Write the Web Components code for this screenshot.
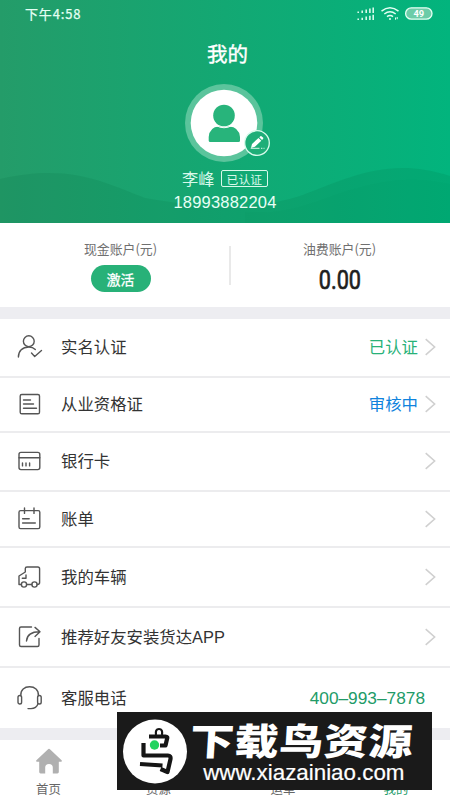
<!DOCTYPE html>
<html lang="zh-CN">
<head>
<meta charset="utf-8">
<title>我的</title>
<style>
html,body{margin:0;padding:0}
body{width:450px;height:800px;overflow:hidden;background:#fff;color:#333;font-family:"Noto Sans CJK SC",sans-serif}
</style>
</head>
<body>
<profile-page></profile-page>
<script>
function define(name, html){
  const t=document.createElement('template');
  t.innerHTML=html;
  customElements.define(name,class extends HTMLElement{
    constructor(){super();this.attachShadow({mode:'open'}).append(t.content.cloneNode(true));}
    connectedCallback(){
      this.shadowRoot.querySelectorAll('[data-icon]').forEach(e=>{e.innerHTML=icons[this.getAttribute('icon')]||'';});
    }
  });
}
const icons={
  user:'<circle cx="11.8" cy="7.2" r="5.4"/><path d="M1.4 23c0-6 4-10 10.4-10 3 0 5 1 6.5 2.5M14.5 19l3.2 3.4 6.8-6"/>',
  doc:'<rect x="3.2" y="3.5" width="19.3" height="19.3" rx="1.6"/><path d="M6.5 9h7M6.5 13h10M6.5 17.3h13"/>',
  card:'<rect x="2" y="4.4" width="20.8" height="17.2" rx="2"/><path d="M2 9.8h20.8M5.5 14.9v3M9 14.9v3M12.6 14.9v3"/>',
  bill:'<rect x="2" y="4.6" width="20.8" height="18" rx="1.6"/><path d="M7.5 2v5.4M17 2v5.4M5.6 12.7h6.6M5.6 17h12.7"/>',
  truck:'<path d="M4.3 20.5H2V12L8.3 8V4.5Q8.3 3 10 3H20.8Q22.6 3 22.6 4.8V18.5Q22.6 20.5 20.3 20.5M9.7 20.5h5M9 11v3.2H5.3"/><circle cx="7" cy="20.5" r="2.6"/><circle cx="17.5" cy="20.5" r="2.6"/>',
  share:'<path d="M14.5 3H4Q2.5 3 2.5 4.5V21Q2.5 22.5 4 22.5H20.5Q22 22.5 22 21V14.5M9.5 17C10 11 14 7.8 22.5 7.8M18 3.4l5 4.4L18 12.4"/>',
  phone:'<path d="M3.8 10.5C3.5 5 7.5 1.8 12.6 1.8S21.7 5 21.4 10.5M21 18.8C20 21.8 17 23.6 14 23.6h-3"/><rect x="1" y="10.5" width="3.6" height="8.5" rx="1.8"/><rect x="20.6" y="10.5" width="3.6" height="8.5" rx="1.8"/>'
};

define('status-bar',`<style>
:host{display:flex;height:28px;padding:0 17px 0 25px;align-items:center;justify-content:space-between;box-sizing:border-box;color:#e4fff3}
span{font:400 13px/28px "Noto Sans CJK SC",sans-serif;letter-spacing:.85px;-webkit-text-stroke:.25px}
svg{display:block}
</style><span>下午4:58</span>
<svg width="76" height="18" viewBox="0 0 76 18" fill="none" stroke="currentColor">
<path stroke-width="1.5" d="M1.2 7.2v1.5M5.2 6.4v2.3M9.2 5.4v3.3M12.9 4.4v4.3M16.2 3.3v5.4M1.2 14.4v1.5M5.2 13.6v2.3M9.2 12.4v3.5M12.9 11.6v4.3M16.2 10.5v5.4" transform="translate(0 -.8)"/>
<path stroke-width="1.5" d="M24.5 6.2Q33 -.8 41.5 6.2M27.3 9Q33 4.5 38.7 9M30 11.7Q33 9.3 36 11.7"/><circle cx="33" cy="14" r="1" fill="currentColor" stroke="none"/>
<path stroke-width="1" d="M38.5 12.5v2.2M40.2 12v2.2"/>
<rect x="48.6" y="2.8" width="26.4" height="11.4" rx="5.7" fill="#6ccca8" stroke-width="1.3"/>
<text x="61.8" y="11.8" text-anchor="middle" font-family="Roboto,sans-serif" font-weight="700" font-size="9.3" fill="#fff" stroke="none">49</text></svg>`);

define('user-avatar',`<style>
:host{display:block;position:relative;width:78px;height:78px}
svg{display:block}.edit{position:absolute;left:59px;top:44.5px}
</style>
<svg width="78" height="78"><circle cx="39" cy="39" r="39" fill="#5bc49c"/><circle cx="39" cy="39" r="33.3" fill="#fff"/><circle cx="39" cy="31.5" r="10.8" fill="#28b47b"/><path d="M23.7 56.7V53Q24.5 43 34 42.5 39 44 44 42.5 54 43 55 53v3.7q0 1.4-1.5 1.4H25.2q-1.5 0-1.5-1.4z" fill="#28b47b"/><path d="M31 41.5Q39 46 47 41.5" stroke="#fff" stroke-width="1" fill="none"/></svg>
<svg class="edit" width="26" height="28" viewBox="0 0 26 28"><circle cx="13" cy="14" r="12.3" fill="#1eae78" stroke="#d8fbec" stroke-width="1.3"/><path d="M7 19l1-4 6.5-6.1 2.8 2.8-6.4 6.1zM15.3 8.2l1.1-1q.7-.5 1.4.2l1.2 1.2q.7.7 0 1.4l-1 1z" fill="#fff"/><path d="M6.7 19.3h8.8M17 19.3h1.4M19.5 19.3h1" stroke="#d8fbec"/></svg>`);

define('profile-header',`<style>
:host{display:flex;flex-direction:column;height:223px;color:#fff;position:relative;background:linear-gradient(90deg,#249c69,#02b47d);overflow:hidden}
.wave{position:absolute;left:0;top:0}
status-bar,.col{position:relative}
.col{display:flex;flex-direction:column;align-items:center}
h1{font-weight:400;font-size:20.5px;line-height:30px;margin:10px 0 16px 5px;-webkit-text-stroke:.4px}
user-avatar{margin-right:2px}
.name{display:flex;align-items:center;gap:6px;height:24px;margin-top:4px;color:#d9f9eb}
.name b{font-weight:400;font-size:16.3px;line-height:24px}
.name i{font-style:normal;font-size:11.8px;line-height:15px;height:15px;border:1.4px solid #d9f9eb;border-radius:2px;padding:0 5px;margin-top:1px}
.tel{font:400 16.5px/22px "Liberation Sans",sans-serif;color:#e9fff6;letter-spacing:.2px;margin-top:1px}
</style>
<svg class="wave" width="450" height="223"><path d="M0 179C70 163 105 183 145 198 195 207 250 212 300 196 350 177 390 156 450 176V223H0z" fill="#00643c" opacity=".12"/><path d="M245 212C290 216 320 199 350 190 390 178 415 177 450 184V223H245z" fill="#007544" opacity=".04"/></svg>
<status-bar></status-bar>
<div class="col"><h1>我的</h1><user-avatar></user-avatar><div class="name"><b>李峰</b><i>已认证</i></div><div class="tel">18993882204</div></div>`);

define('account-summary',`<style>
:host{display:flex;height:84px;background:#fff;align-items:center}
.c{flex:1;height:84px;display:flex;flex-direction:column;align-items:center;box-sizing:border-box}
.a{padding-left:12px}.b{padding-right:2px}
small{font-size:12.9px;line-height:20px;color:#707070;margin-top:16px}
button{border:0;border-radius:14px;width:60px;height:27px;background:#28b178;color:#fff;font:400 13.8px/26px "Noto Sans CJK SC",sans-serif;-webkit-text-stroke:.3px;padding:0;margin-top:6px}
hr{border:0;width:2px;height:39px;background:#e9e9e9;margin:0}
strong{font:400 25.5px/29px Roboto,sans-serif;color:#1e1e1e;margin-top:7px;transform:scaleX(.85);-webkit-text-stroke:.7px}
</style><div class="c a"><small>现金账户(元)</small><button>激活</button></div><hr><div class="c b"><small>油费账户(元)</small><strong>0.00</strong></div>`);

define('menu-row',`<style>
:host{display:flex;align-items:center;box-sizing:border-box;height:var(--h);padding:0 15px 1px 17px;border-bottom:2px solid #ececee;background:#fff}
.i{width:26px;height:26px;stroke:#555;fill:none;stroke-width:1.4;stroke-linecap:round;stroke-linejoin:round;margin-right:18px}
.l{flex:1;font-family:"Liberation Sans","Noto Sans CJK SC",sans-serif;font-size:16.4px;line-height:24px;white-space:nowrap}
.v{font-size:16.4px;line-height:24px;padding-bottom:2px}
.c{width:11px;height:18px;margin-left:7px;margin-right:-1px}
:host([last]){border:0}:host([last]) .c{display:none}
:host([last]) .v{font:400 17.3px/24px "Liberation Sans",sans-serif;margin-right:10px;padding:0}
</style><svg class="i" viewBox="0 0 26 26" data-icon></svg><span class="l"><slot></slot></span><span class="v"><slot name="value"></slot></span>
<svg class="c" viewBox="0 0 11 18"><path d="M.7 1.2 9.6 9 .7 16.8" fill="none" stroke="#d0d0d0" stroke-width="1.6"/></svg>`);

define('tab-item',`<style>
:host{display:flex;flex-direction:column;align-items:center;color:#666;font-size:12.4px;line-height:18px;padding-top:8px;box-sizing:border-box;height:60px}
svg{width:28px;height:28px;margin-bottom:4px}
</style><svg viewBox="0 0 28 28"><path d="M12.8 1.4Q14 .3 15.2 1.4L26.6 12.3Q27.5 13.6 26 13.8H23.8V24Q23.8 25.4 22.4 25.4H17.8V19.5Q17.8 16 14 16T10.2 19.5V25.4H5.6Q4.2 25.4 4.2 24V13.8H2Q.5 13.6 1.4 12.3z" fill="#b0b0b0"/></svg><span><slot></slot></span>`);

define('tab-bar',`<style>
:host{display:grid;grid-template-columns:97px 123px 126px 100px;height:60px;background:#fff}
.on{color:#229b68}
</style><tab-item>首页</tab-item><tab-item>资源</tab-item><tab-item>运单</tab-item><tab-item class="on">我的</tab-item>`);

define('site-banner',`<style>
:host{display:flex;position:absolute;left:117px;top:712px;width:315px;height:78px;background:#1a1a1a;color:#fff;align-items:center;box-sizing:border-box;padding-left:5px}
svg{display:block;flex:none}
.t{display:flex;flex-direction:column;align-items:center;width:228px}
b{font-weight:900;font-size:37px;line-height:38px;white-space:nowrap;transform:scaleX(1.19) skewX(-3deg);letter-spacing:.5px;margin-top:3px}
span{font:400 21.5px/24px "Liberation Sans",sans-serif;-webkit-text-stroke:.2px #fff;white-space:nowrap;margin:3px 0 0 4px;transform:scaleX(1.04)}
</style>
<svg width="66" height="66" viewBox="0 0 66 66"><circle cx="33" cy="33.5" r="32" fill="#fff"/><g fill="none" stroke="#151515" stroke-width="4.2" stroke-linejoin="round"><path d="M27 18.5H43.5Q46 18.5 45 21L43.5 27.5H38M21.5 25V37.5H46Q49 37.5 48.5 41L45.5 54 38.5 51M18 46L40.5 47.5"/></g><path d="M34 17q-1-6 3-6t3 6" fill="none" stroke="#151515" stroke-width="2.2"/><circle cx="32.5" cy="27" r="4.7" fill="#20d35e"/></svg>
<div class="t"><b>下载鸟资源</b><span>www.xiazainiao.com</span></div>`);

define('profile-page',`<style>
:host{display:flex;flex-direction:column;width:450px;height:800px;position:relative;overflow:hidden;background:#ededf1}
.menu{margin:12px 0}
.g{color:#28b178}.u{color:#0f83dd}.t{color:#229b68}
</style>
<profile-header></profile-header><account-summary></account-summary>
<div class="menu">
<menu-row icon="user" style="--h:59px">实名认证<span slot="value" class="g">已认证</span></menu-row>
<menu-row icon="doc" style="--h:55px">从业资格证<span slot="value" class="u">审核中</span></menu-row>
<menu-row icon="card" style="--h:59px">银行卡</menu-row>
<menu-row icon="bill" style="--h:56px">账单</menu-row>
<menu-row icon="truck" style="--h:60px">我的车辆</menu-row>
<menu-row icon="share" style="--h:60px">推荐好友安装货达APP</menu-row>
<menu-row icon="phone" last style="--h:60px">客服电话<span slot="value" class="t">400–993–7878</span></menu-row>
</div><tab-bar></tab-bar><site-banner></site-banner>`);
</script>
</body>
</html>
